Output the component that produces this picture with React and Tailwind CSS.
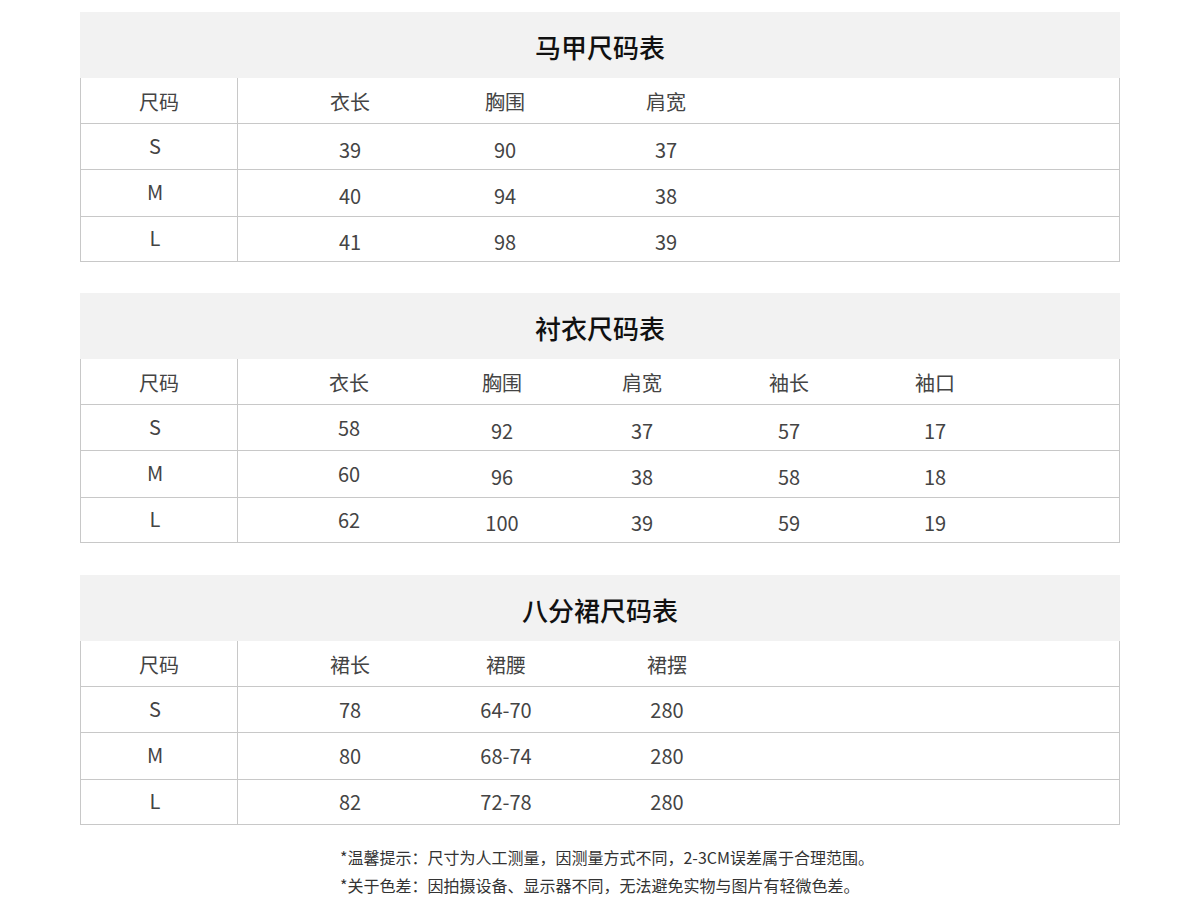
import React from "react";

const tables = [
  {
    title: "马甲尺码表",
    widths: [224, 86, 236],
    shift: [3, 3, 3],
    head: ["衣长", "胸围", "肩宽"],
    rows: [
      ["S", "39", "90", "37"],
      ["M", "40", "94", "38"],
      ["L", "41", "98", "39"],
    ],
  },
  {
    title: "衬衣尺码表",
    widths: [222, 84, 196, 98, 194],
    shift: [0, 3, 3, 3, 3],
    head: ["衣长", "胸围", "肩宽", "袖长", "袖口"],
    rows: [
      ["S", "58", "92", "37", "57", "17"],
      ["M", "60", "96", "38", "58", "18"],
      ["L", "62", "100", "39", "59", "19"],
    ],
  },
  {
    title: "八分裙尺码表",
    widths: [224, 88, 234],
    shift: [0, 0, 0],
    head: ["裙长", "裙腰", "裙摆"],
    rows: [
      ["S", "78", "64-70", "280"],
      ["M", "80", "68-74", "280"],
      ["L", "82", "72-78", "280"],
    ],
  },
];

const rowHeights = ["h-[46px]", "h-[47px]", "h-[45px]"];

const Row = ({ first, cells, widths, shift, height, isHead }) => {
  return (
    <div className={`flex ${height} border-b border-[#c8c8c8]`}>
      <div className="w-[157px] shrink-0 border-r border-[#c8c8c8] flex items-center justify-center">
        <span className={isHead ? "translate-y-[1px]" : "-translate-y-[1px] -translate-x-[4px]"}>{first}</span>
      </div>
      {cells.map((c, i) => (
        <div
          key={i}
          style={{ width: widths[i], transform: isHead ? "translateY(1px)" : `translateY(${shift[i]}px)` }}
          className="shrink-0 flex items-center justify-center"
        >
          {c}
        </div>
      ))}
    </div>
  );
};

const SizeTable = ({ t }) => {
  return (
    <div className="w-[1040px] mx-auto">
      <div className="h-[66px] bg-[#f2f2f2] flex items-center justify-center text-[26px] font-medium text-[#111]">
        <span className="translate-y-[1px]">{t.title}</span>
      </div>
      <div className="border-l border-r border-[#c8c8c8] text-[20px] text-[#444]">
        <Row first="尺码" cells={t.head} widths={t.widths} shift={t.shift} height="h-[46px]" isHead />
        {t.rows.map((r, i) => (
          <Row
            key={r[0]}
            first={r[0]}
            cells={r.slice(1)}
            widths={t.widths}
            shift={t.shift}
            height={rowHeights[i]}
          />
        ))}
      </div>
    </div>
  );
};

export default function App() {
  return (
    <div
      className="w-[1200px] h-[906px] bg-white pt-[12px]"
      style={{ fontFamily: '"Noto Sans CJK SC", "Noto Sans", sans-serif' }}
    >
      <SizeTable t={tables[0]} />
      <div className="mt-[31px]">
        <SizeTable t={tables[1]} />
      </div>
      <div className="mt-[32px]">
        <SizeTable t={tables[2]} />
      </div>
      <div className="mt-[18px] pl-[340px] text-[16px] leading-[28px] text-[#333]">
        <p>*温馨提示：尺寸为人工测量，因测量方式不同，2-3CM误差属于合理范围。</p>
        <p>*关于色差：因拍摄设备、显示器不同，无法避免实物与图片有轻微色差。</p>
      </div>
    </div>
  );
}
